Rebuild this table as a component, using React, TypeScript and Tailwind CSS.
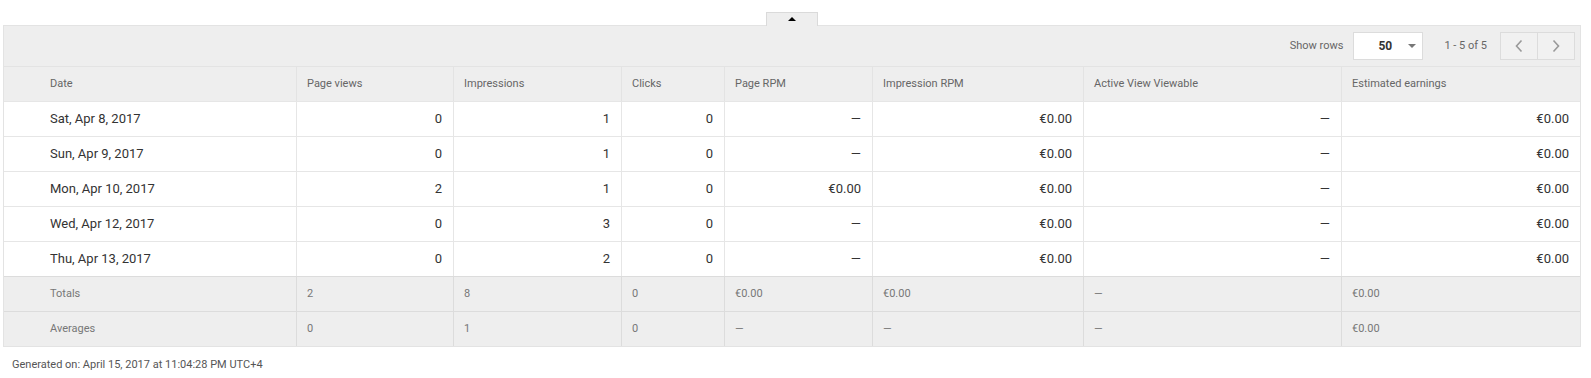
import React from "react";

const COLS = "grid grid-cols-[292px_157px_168px_103px_148px_211px_258px_239px]";

const headers = [
  "Date",
  "Page views",
  "Impressions",
  "Clicks",
  "Page RPM",
  "Impression RPM",
  "Active View Viewable",
  "Estimated earnings",
];

const D = "—";

const rows: string[][] = [
  ["Sat, Apr 8, 2017", "0", "1", "0", D, "€0.00", D, "€0.00"],
  ["Sun, Apr 9, 2017", "0", "1", "0", D, "€0.00", D, "€0.00"],
  ["Mon, Apr 10, 2017", "2", "1", "0", "€0.00", "€0.00", D, "€0.00"],
  ["Wed, Apr 12, 2017", "0", "3", "0", D, "€0.00", D, "€0.00"],
  ["Thu, Apr 13, 2017", "0", "2", "0", D, "€0.00", D, "€0.00"],
];

const summary: string[][] = [
  ["Totals", "2", "8", "0", "€0.00", "€0.00", D, "€0.00"],
  ["Averages", "0", "1", "0", D, D, D, "€0.00"],
];

export default function App() {
  return (
    <div
      className="w-[1591px] h-[378px] bg-white"
      style={{ fontFamily: "Roboto, 'Liberation Sans', Arial, sans-serif" }}
    >
      <div className="pt-[12px] pl-[3px]">
        <div className="w-[1578px] flex justify-center">
          <div className="relative z-10 -mb-px w-[52px] h-[14px] bg-[#eeeeee] border border-b-0 border-[#dadada] flex items-center justify-center">
            <div className="w-0 h-0 border-l-[4px] border-r-[4px] border-b-[4px] border-l-transparent border-r-transparent border-b-black mt-[-1px]" />
          </div>
        </div>
        <div className="w-[1578px] border border-[#e3e3e3] bg-[#eeeeee]">
          {/* toolbar */}
          <div className="h-[40px] flex items-center justify-end pr-[5px] text-[11px] text-[#666]">
            <span className="mr-[10px]">Show rows</span>
            <div className="w-[70px] h-[28px] bg-white border border-[#dcdcdc] flex items-center pl-[24px] pr-[6px]">
              <span className="text-[12px] font-bold text-[#333]">50</span>
              <div className="ml-auto w-0 h-0 border-l-[4px] border-r-[4px] border-t-[4px] border-l-transparent border-r-transparent border-t-[#777]" />
            </div>
            <span className="ml-[21px] mr-[13px]">1 - 5 of 5</span>
            <div className="flex h-[28px] border border-[#dcdcdc] bg-[#f1f1f1]">
              <div className="w-[36px] flex items-center justify-center">
                <svg width="10" height="14" viewBox="0 0 10 14">
                  <path d="M7.5 1.5 L2.5 7 L7.5 12.5" fill="none" stroke="#999" strokeWidth="1.6" />
                </svg>
              </div>
              <div className="w-[37px] border-l border-[#dcdcdc] flex items-center justify-center">
                <svg width="10" height="14" viewBox="0 0 10 14">
                  <path d="M2.5 1.5 L7.5 7 L2.5 12.5" fill="none" stroke="#999" strokeWidth="1.6" />
                </svg>
              </div>
            </div>
          </div>
          {/* header */}
          <div className={`${COLS} h-[35px] border-t border-[#e3e3e3] text-[11px] text-[#666]`}>
            {headers.map((h, i) => (
              <div
                key={h}
                className={`flex items-center ${i === 0 ? "pl-[46px]" : "pl-[10px] border-l border-[#e3e3e3]"}`}
              >
                {h}
              </div>
            ))}
          </div>
          {/* data rows */}
          {rows.map((r, ri) => (
            <div
              key={ri}
              className={`${COLS} h-[35px] border-t border-[#e6e6e6] bg-white text-[13px] text-[#333]`}
            >
              {r.map((c, i) => (
                <div
                  key={i}
                  className={`flex items-center ${
                    i === 0
                      ? "pl-[46px]"
                      : "justify-end pr-[11px] border-l border-[#e6e6e6]"
                  }`}
                >
                  {c}
                </div>
              ))}
            </div>
          ))}
          {/* summary rows */}
          {summary.map((r, ri) => (
            <div
              key={ri}
              className={`${COLS} h-[35px] border-t border-[#dcdcdc] text-[11px] text-[#777]`}
            >
              {r.map((c, i) => (
                <div
                  key={i}
                  className={`flex items-center ${
                    i === 0 ? "pl-[46px]" : "pl-[10px] border-l border-[#dcdcdc]"
                  }`}
                >
                  {c}
                </div>
              ))}
            </div>
          ))}
        </div>
        <div className="pl-[9px] mt-[10px] text-[11px] text-[#555]">
          Generated on: April 15, 2017 at 11:04:28 PM UTC+4
        </div>
      </div>
    </div>
  );
}
